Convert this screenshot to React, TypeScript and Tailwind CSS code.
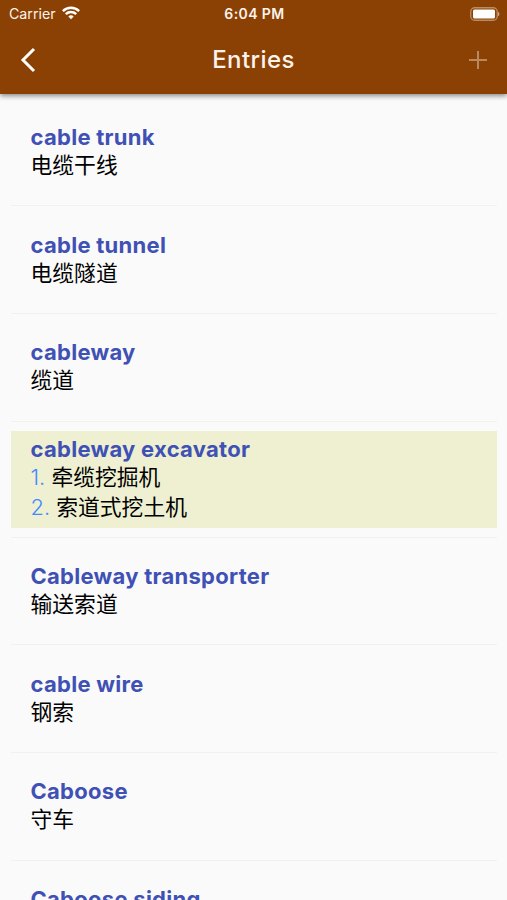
interface Entry {
  term: string
  meanings: string[]
}

const entries: Entry[] = [
  { term: "cable trunk", meanings: ["电缆干线"] },
  { term: "cable tunnel", meanings: ["电缆隧道"] },
  { term: "cableway", meanings: ["缆道"] },
  { term: "cableway excavator", meanings: ["牵缆挖掘机", "索道式挖土机"] },
  { term: "Cableway transporter", meanings: ["输送索道"] },
  { term: "cable wire", meanings: ["钢索"] },
  { term: "Caboose", meanings: ["守车"] },
  { term: "Caboose siding", meanings: [] },
]

export default function App() {
  return (
    <div className="flex h-[900px] w-[507px] flex-col overflow-hidden bg-[#fafafa] font-['Inter','Noto_Sans_CJK_SC',sans-serif]">
      <header className="relative z-10 h-[94px] shrink-0 bg-[#8b4103] text-[#fdf3ec] shadow-[0_2px_5px_rgba(0,0,0,0.45)]">
        <StatusBar />
        <NavBar />
      </header>
      <main className="pl-[11px] pr-[10px] pt-[4.8px]">
        {entries.map((entry) => (
          <EntryRow key={entry.term} entry={entry} />
        ))}
      </main>
    </div>
  )
}

function StatusBar() {
  return (
    <div className="grid h-[27px] grid-cols-3 items-center pl-[9px] pr-[7px]">
      <div className="flex items-center gap-[6px]">
        <span className="text-[14.2px]">Carrier</span>
        <svg width="18" height="14" viewBox="0 0 18 14" fill="none" stroke="#fff" strokeWidth="2.5">
          <path d="M0.9 5.1a11.6 11.6 0 0 1 16.2 0" />
          <path d="M3.8 8.2a7.5 7.5 0 0 1 10.4 0" />
          <path d="M9 13.3L6.3 10.5a3.9 3.9 0 0 1 5.4 0z" fill="#fff" stroke="none" />
        </svg>
      </div>
      <span className="text-center text-[14px] font-semibold tracking-[0.4px]">6:04 PM</span>
      <svg className="justify-self-end" width="30" height="14" viewBox="0 0 30 14" fill="none">
        <rect x="0.75" y="0.75" width="26.5" height="12.5" rx="4" stroke="#fff" strokeWidth="1.3" opacity="0.4" />
        <rect x="3" y="2.5" width="22" height="9" rx="1.5" fill="#fff" />
        <path d="M28 4.7a2.5 2.5 0 0 1 0 4.6z" fill="#fff" opacity="0.5" />
      </svg>
    </div>
  )
}

function NavBar() {
  return (
    <div className="grid h-[66px] grid-cols-3 items-center px-[20px]">
      <button aria-label="Back">
        <svg width="16" height="26" viewBox="0 0 16 26" fill="none" stroke="#fff" strokeWidth="3">
          <path d="M14 2L3 13l11 11" />
        </svg>
      </button>
      <h1 className="text-center text-[24px] font-medium tracking-[0.4px]">Entries</h1>
      <button className="justify-self-end opacity-40" aria-label="Add">
        <svg width="18" height="18" viewBox="0 0 18 18" stroke="currentColor" strokeWidth="2">
          <path d="M9 0v18M0 9h18" />
        </svg>
      </button>
    </div>
  )
}

function EntryRow({ entry }: { entry: Entry }) {
  const numbered = entry.meanings.length > 1

  return (
    <div className={numbered ? "border-b border-[#f1f1f1] pb-[8.6px] pt-[9.6px]" : "h-[107.6px] border-b border-[#f1f1f1] pt-[24.5px]"}>
      <div className={numbered ? "h-[97px] bg-[#eef0d1] px-[19.5px] pt-[4px]" : "px-[19.5px]"}>
        <h2 className="text-[22px] font-[650] leading-[28px] tracking-[0.28px] text-[#3f51b5]">{entry.term}</h2>
        <div className="-mt-px">
          {entry.meanings.map((meaning, i) => (
            <p key={meaning} className="text-[21.8px] leading-[30px] text-black">
              {numbered && <span className="font-light text-[#448aff]">{i + 1}. </span>}
              {meaning}
            </p>
          ))}
        </div>
      </div>
    </div>
  )
}
